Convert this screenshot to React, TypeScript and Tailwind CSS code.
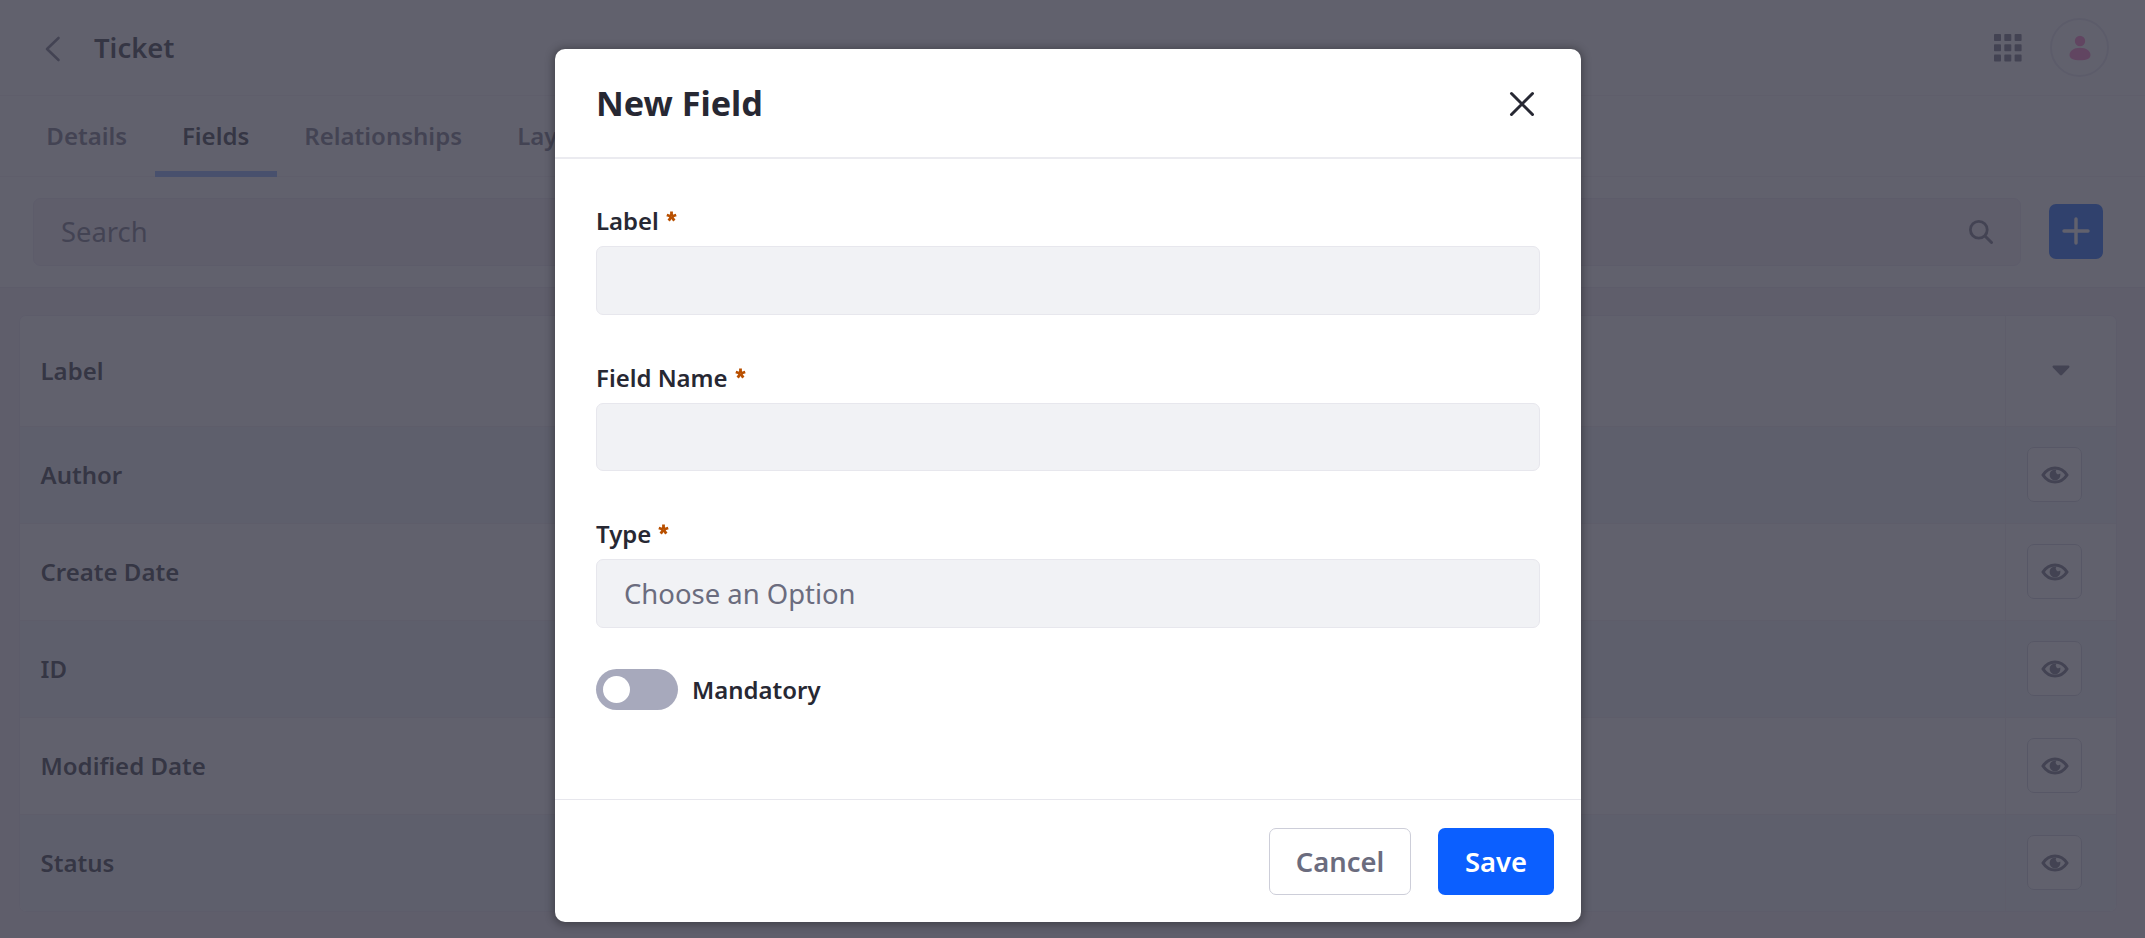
import React from "react";

const rows = ["Author", "Create Date", "ID", "Modified Date", "Status"];

function EyeIcon() {
  return (
    <svg className="h-[18px] w-[28px]" viewBox="0 0 28 18" fill="none">
      <path d="M2 9C5 4.400 9.400 2 14 2s9 2.400 12 7c-3 4.600-7.400 7-12 7S5 13.600 2 9z" stroke="#6b6c7e" strokeWidth="3.200" strokeLinejoin="round" />
      <path d="M14 3.500a5.400 5.400 0 1 0 5.400 5.400c0-.500-.100-.900-.200-1.300a2.700 2.700 0 0 1-3.800-3.800c-.400-.200-.900-.300-1.400-.300z" fill="#6b6c7e" />
    </svg>
  );
}

function Asterisk() {
  return (
    <svg className="mt-[8px] ml-[7px] h-[11px] w-[11px]" viewBox="0 0 11 11" fill="none" stroke="#b95000" strokeWidth="2.800">
      <path d="M5.500 5.500V.5M5.500 5.500L.8 4M5.500 5.500l4.700-1.500M5.500 5.500L2.700 9.600M5.500 5.500l2.800 4.100" />
    </svg>
  );
}

function FieldLabel({ text }: { text: string }) {
  return (
    <div className="flex h-[36px] items-start text-[23.94px] leading-[36px] font-semibold">
      {text}
      <Asterisk />
    </div>
  );
}

function Page() {
  return (
    <div className="flex h-[938px] w-full flex-col bg-[#f3edf6]">
      <header className="flex h-[96px] shrink-0 items-center border-b border-[#f3edf6] bg-white pr-[36px] pl-[45px]">
        <svg className="mt-[3px] h-[26px] w-[16px]" viewBox="0 0 16 26" fill="none" stroke="#6b6c7e" strokeWidth="2.600" strokeLinecap="round" strokeLinejoin="round">
          <path d="M13.500 2L2 13l11.500 11" />
        </svg>
        <h1 className="ml-[33px] text-[27.45px] leading-[41px] font-semibold">Ticket</h1>
        <svg className="ml-auto h-[28px] w-[28px]" viewBox="0 0 28 28" fill="#6b6c7e">
          {[0, 10.3, 20.6].map((y) =>
            [0, 10.3, 20.6].map((x) => <rect key={`${x}-${y}`} x={x} y={y} width="7" height="7" rx=".8" />)
          )}
        </svg>
        <div className="ml-[28px] flex h-[59px] w-[59px] items-center justify-center rounded-full border-2 border-[#e7e4ee]">
          <svg className="h-[26px] w-[22px]" viewBox="0 0 22 26" fill="#ff73c3">
            <circle cx="11" cy="6" r="5.200" />
            <path d="M11 12.800c6.500 0 10.500 3.500 10.500 7.200 0 3.500-3.500 5.300-10.500 5.300S.5 23.500.5 20c0-3.700 4-7.200 10.500-7.200z" />
          </svg>
        </div>
      </header>
      <nav className="flex h-[81px] shrink-0 border-b border-[#f3edf6] bg-white pl-[19px] text-[24px] leading-[80px] font-semibold text-[#6b6c7e]">
        <div className="px-[27.36px]">Details</div>
        <div className="relative px-[27.36px] text-[#272833]">
          Fields
          <div className="absolute inset-x-0 -bottom-px h-[6px] bg-[#80acff]" />
        </div>
        <div className="px-[27.6px]">Relationships</div>
        <div className="px-[27.6px]">Layouts</div>
      </nav>
      <div className="flex h-[111px] shrink-0 items-center border-b border-[#ebe7f0] bg-white pr-[42px] pl-[33px]">
        <div className="flex h-[68px] grow items-center justify-between rounded-[7px] border border-[#ebe7f0] bg-[#f3edf6] pr-[27px] pl-[27px] text-[27.36px] text-[#6b6c7e]">
          <span>Search</span>
          <svg className="mb-[1px] h-[24px] w-[24px]" viewBox="0 0 24 24" fill="none" stroke="#6b6c7e" strokeWidth="2.800" strokeLinecap="round">
            <circle cx="9.800" cy="9.800" r="8.400" />
            <path d="M16 16l6.500 6.500" strokeWidth="3" />
          </svg>
        </div>
        <button className="mb-[2px] ml-[28px] flex h-[55px] w-[54px] items-center justify-center rounded-[7px] bg-[#0b5fff]">
          <svg className="h-[28px] w-[28px]" viewBox="0 0 28 28" stroke="#fff" strokeWidth="3.400" strokeLinecap="round">
            <path d="M14 2v24M2 14h24" />
          </svg>
        </button>
      </div>
      <div className="mt-[27px] mr-[28px] ml-[19px] flex flex-col overflow-hidden rounded-[7px] border border-[#ebe7f0] bg-white text-[24px] font-semibold">
        <div className="flex h-[111px] border-b border-[#ede8f0]">
          <div className="flex grow items-center pl-[20.500px]">Label</div>
          <div className="flex w-[111px] items-center justify-center border-l border-[#ede8f0]">
            <svg className="mb-[1px] h-[11px] w-[18px]" viewBox="0 0 18 11" fill="#6b6c7e">
              <path d="M1.500.5h15c1 0 1.400 1.200.7 1.900l-7.200 7.700c-.6.600-1.400.6-2 0L.8 2.400C.1 1.700.5.5 1.500.5z" />
            </svg>
          </div>
        </div>
        {rows.map((name, i) => (
          <div key={name} className={`flex border-[#ede8f0] ${i === rows.length - 1 ? "h-[96px]" : "h-[97px] border-b"} ${i % 2 === 0 ? "bg-[#f1f6fa]" : "bg-white"}`}>
            <div className="flex grow items-center pl-[20.500px]">{name}</div>
            <div className="flex w-[111px] items-start border-l border-[#ede8f0] pt-[20px] pl-[21px]">
              <button className="flex h-[55px] w-[55px] items-center justify-center rounded-[7px] border border-[#cdced9] bg-white">
                <EyeIcon />
              </button>
            </div>
          </div>
        ))}
      </div>
    </div>
  );
}

function Modal() {
  return (
    <div role="dialog" className="flex h-[873px] w-[1026px] flex-col rounded-[10px] bg-white shadow-[0_1px_9px_2px_rgba(0,0,0,0.3)]">
      <div className="flex h-[110px] items-center justify-between border-b-2 border-[#ebebf0] pr-[46px] pl-[41px]">
        <h2 className="text-[34.2px] leading-[46px] font-bold">New Field</h2>
        <svg className="mt-[2px] h-[26px] w-[26px]" viewBox="0 0 26 26" stroke="#272833" strokeWidth="3" strokeLinecap="round">
          <path d="M2.500 2.500l21 21M23.500 2.500l-21 21" />
        </svg>
      </div>
      <div className="flex grow flex-col px-[41px] pt-[44px]">
        <FieldLabel text="Label" />
        <div className="mt-[7px] h-[69px] rounded-[7px] border border-[#e7e7ed] bg-[#f1f2f5]" />
        <div className="h-[45px]" />
        <FieldLabel text="Field Name" />
        <div className="mt-[7px] h-[68px] rounded-[7px] border border-[#e7e7ed] bg-[#f1f2f5]" />
        <div className="h-[45px]" />
        <FieldLabel text="Type" />
        <div className="mt-[7px] flex h-[69px] items-center rounded-[7px] border border-[#e7e7ed] bg-[#f1f2f5] pl-[27px] text-[27.45px] text-[#6b6c7e]">Choose an Option</div>
        <div className="mt-[41px] flex items-center">
          <div className="flex h-[41px] w-[82px] items-center rounded-full bg-[#a7a9bc] pl-[7px]">
            <div className="h-[27px] w-[27px] rounded-full bg-white" />
          </div>
          <span className="ml-[14px] text-[23.94px] leading-[36px] font-semibold">Mandatory</span>
        </div>
      </div>
      <div className="flex h-[123px] items-center justify-end gap-[27px] border-t border-[#e7e7ed] pr-[27px] text-[27.36px] font-semibold">
        <button className="h-[67px] w-[142px] rounded-[7px] border border-[#cdced9] pt-[2px] text-[#6b6c7e]">Cancel</button>
        <button className="h-[67px] w-[116px] rounded-[7px] bg-[#0b5fff] pt-[2px] text-white">Save</button>
      </div>
    </div>
  );
}

export default function App() {
  return (
    <div className="relative h-[938px] w-full overflow-hidden font-['Noto_Sans',sans-serif] text-[#272833]">
      <Page />
      <div className="absolute inset-0 flex justify-center bg-[#393a48]/80 pt-[49px] pr-[9px]">
        <Modal />
      </div>
    </div>
  );
}
